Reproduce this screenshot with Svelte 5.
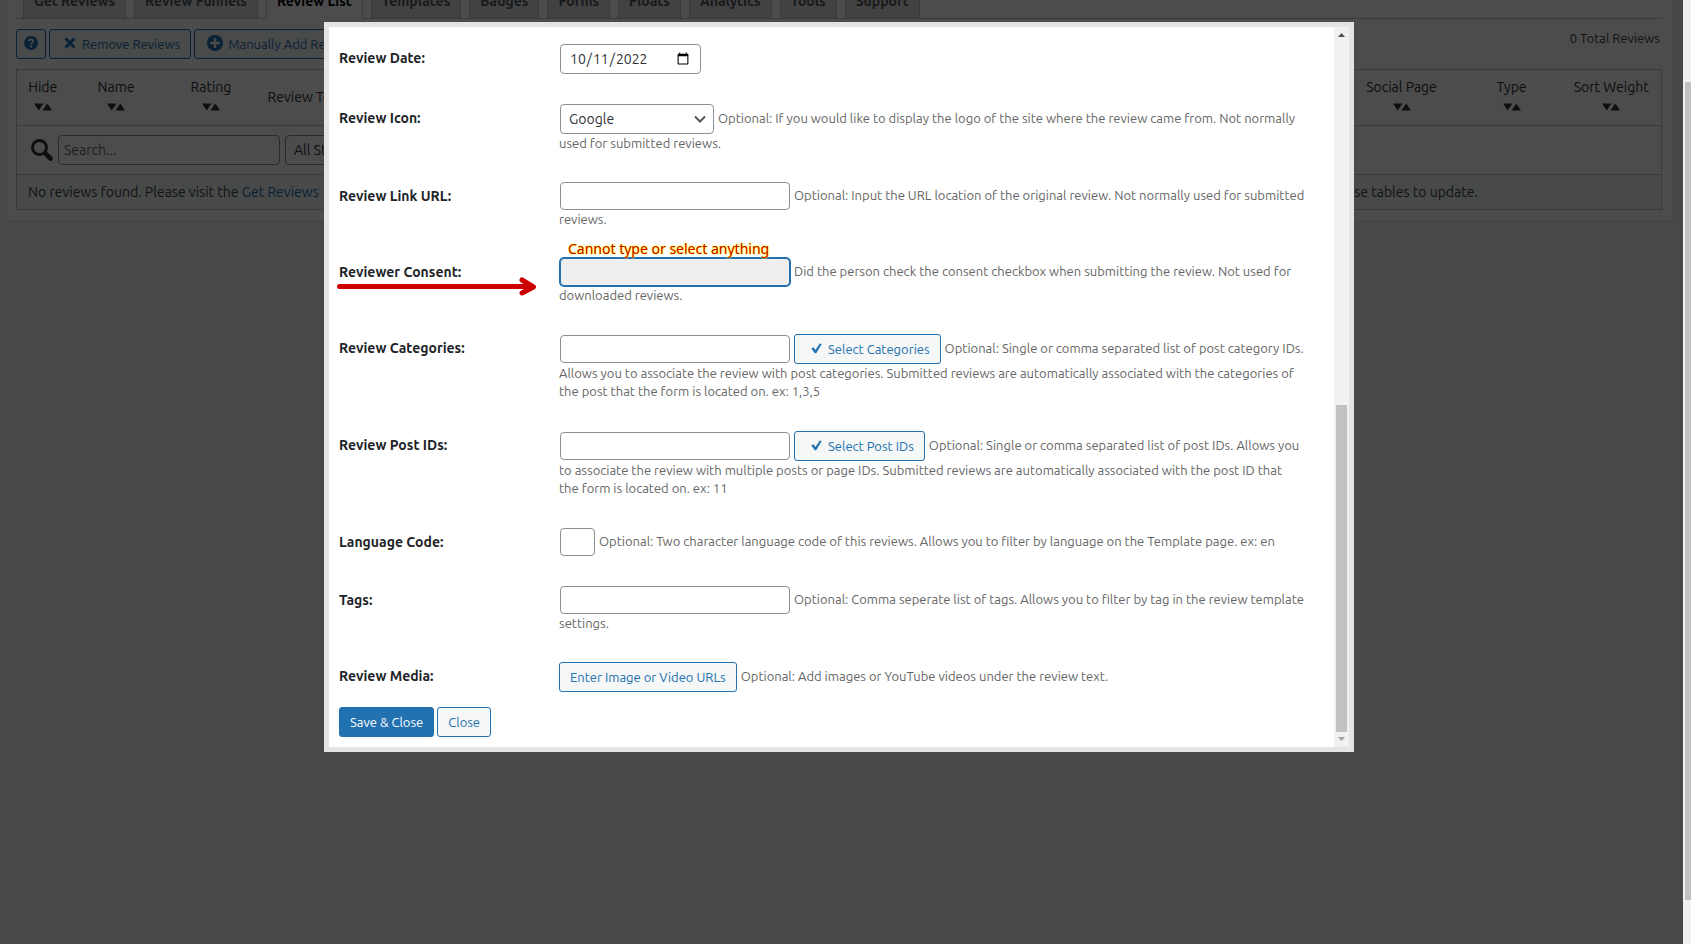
<script lang="ts">
	const tabs = [
		'Get Reviews',
		'Review Funnels',
		'Review List',
		'Templates',
		'Badges',
		'Forms',
		'Floats',
		'Analytics',
		'Tools',
		'Support'
	];
	const activeTab = 'Review List';

	let review = $state({
		date: '2022-10-11',
		icon: 'Google',
		link: '',
		consent: '',
		categories: '',
		posts: '',
		language: '',
		tags: ''
	});
</script>

{#snippet sortable(title: string)}
	<th>
		{title}
		<svg class="sort" width="18" height="8" viewBox="0 0 18 8" aria-hidden="true">
			<path d="M0 0.5H9.5L4.7 7.5ZM8.5 7.5L13.3 0.5L18 7.5Z" />
		</svg>
	</th>
{/snippet}

{#snippet more(lines: string[])}
	{#each lines as line}
		<p class="hint">{line}</p>
	{/each}
{/snippet}

{#snippet check()}
	<svg class="check" width="11" height="11" viewBox="0 0 11 11" aria-hidden="true">
		<path d="M0.3 5.6L2.6 4.3L4.4 7L8.8 0.4L10.7 1L5.2 10.2H3.8Z" />
	</svg>
{/snippet}

<div class="screen">
	<main class="page">
		<section class="panel">
			<nav class="tabs">
				{#each tabs as tab}
					<a href="#{tab}" class="tab" class:active={tab === activeTab}>{tab}</a>
				{/each}
			</nav>

			<div class="toolbar">
				<button class="btn help" aria-label="Help">
					<svg width="14" height="14" viewBox="0 0 14 14" aria-hidden="true">
						<circle cx="7" cy="7" r="7" fill="currentColor" />
						<path d="M4.9 5.3C4.9 2.6 9.2 2.7 9.2 5.1C9.2 6.7 7.1 6.6 7.1 8.3" fill="none" stroke="#f6f7f7" stroke-width="1.8" />
						<rect x="6.1" y="9.4" width="2" height="2" fill="#f6f7f7" />
					</svg>
				</button>
				<button class="btn remove">
					<svg width="12" height="12" viewBox="0 0 12 12" aria-hidden="true">
						<path d="M1.5 1.5L10.5 10.5M10.5 1.5L1.5 10.5" stroke="currentColor" stroke-width="3" />
					</svg>
					Remove Reviews
				</button>
				<button class="btn add">
					<svg width="16" height="16" viewBox="0 0 16 16" aria-hidden="true">
						<circle cx="8" cy="8" r="8" fill="currentColor" />
						<path d="M8 3V13M3 8H13" stroke="#f6f7f7" stroke-width="2.6" />
					</svg>
					Manually Add Review
				</button>
				<span class="total">0 Total Reviews</span>
			</div>

			<table class="reviews">
				<colgroup>
					<col class="c-hide" />
					<col class="c-name" />
					<col class="c-name" />
					<col />
					<col class="c-social" />
					<col class="c-type" />
					<col class="c-type" />
				</colgroup>
				<thead>
					<tr>
						{@render sortable('Hide')}
						{@render sortable('Name')}
						{@render sortable('Rating')}
						<th class="text">Review Text</th>
						{@render sortable('Social Page')}
						{@render sortable('Type')}
						{@render sortable('Sort Weight')}
					</tr>
				</thead>
				<tbody>
					<tr>
						<td colspan="7">
							<div class="filters">
								<svg width="22" height="22" viewBox="0 0 22 22" aria-hidden="true">
									<circle cx="8.5" cy="8.5" r="7" fill="none" stroke="currentColor" stroke-width="3" />
									<path d="M14 14L19.5 19.5" stroke="currentColor" stroke-width="4.6" stroke-linecap="round" />
								</svg>
								<input class="search" type="text" placeholder="Search..." aria-label="Search" />
								<select class="stars" aria-label="Stars">
									<option>All Stars</option>
								</select>
							</div>
						</td>
					</tr>
					<tr class="empty">
						<td colspan="7">
							<div class="notice">
								<span>No reviews found. Please visit the <a href="#get">Get Reviews</a></span>
								<span class="notice-end">these tables to update.</span>
							</div>
						</td>
					</tr>
				</tbody>
			</table>
		</section>
	</main>

	<div class="page-scroll"><div class="thumb"></div></div>

	<div class="overlay">
		<div class="dialog" role="dialog" aria-label="Edit review">
			<form class="form">
				<div class="row">
					<label for="date">Review Date:</label>
					<div class="line">
						<input id="date" class="date" type="date" bind:value={review.date} />
					</div>
				</div>

				<div class="row">
					<label for="icon">Review Icon:</label>
					<div>
						<div class="line">
							<select id="icon" class="icon" bind:value={review.icon}>
								<option>Google</option>
							</select>
							<span class="hint">Optional: If you would like to display the logo of the site where the review came from. Not normally</span>
						</div>
						{@render more(['used for submitted reviews.'])}
					</div>
				</div>

				<div class="row">
					<label for="link">Review Link URL:</label>
					<div>
						<div class="line">
							<input id="link" type="text" bind:value={review.link} />
							<span class="hint">Optional: Input the URL location of the original review. Not normally used for submitted</span>
						</div>
						{@render more(['reviews.'])}
					</div>
				</div>

				<div class="row">
					<label for="consent">Reviewer Consent:</label>
					<svg class="arrow" width="200" height="20" viewBox="0 0 200 20" aria-hidden="true">
						<path d="M2.5 9.5H195M185 3L196.5 10L185 16" />
					</svg>
					<div class="consent">
						<span class="callout">Cannot type or select anything</span>
						<div class="line">
							<input id="consent" type="text" readonly bind:value={review.consent} />
							<span class="hint">Did the person check the consent checkbox when submitting the review. Not used for</span>
						</div>
						{@render more(['downloaded reviews.'])}
					</div>
				</div>

				<div class="row long">
					<label for="categories">Review Categories:</label>
					<div>
						<div class="line">
							<input id="categories" type="text" bind:value={review.categories} />
							<button type="button" class="btn pick">{@render check()}Select Categories</button>
							<span class="hint">Optional: Single or comma separated list of post category IDs.</span>
						</div>
						{@render more([
							'Allows you to associate the review with post categories. Submitted reviews are automatically associated with the categories of',
							'the post that the form is located on. ex: 1,3,5'
						])}
					</div>
				</div>

				<div class="row long">
					<label for="posts">Review Post IDs:</label>
					<div>
						<div class="line">
							<input id="posts" type="text" bind:value={review.posts} />
							<button type="button" class="btn pick">{@render check()}Select Post IDs</button>
							<span class="hint">Optional: Single or comma separated list of post IDs. Allows you</span>
						</div>
						{@render more([
							'to associate the review with multiple posts or page IDs. Submitted reviews are automatically associated with the post ID that',
							'the form is located on. ex: 11'
						])}
					</div>
				</div>

				<div class="row">
					<label for="language">Language Code:</label>
					<div class="line">
						<input id="language" class="code" type="text" maxlength="2" bind:value={review.language} />
						<span class="hint">Optional: Two character language code of this reviews. Allows you to filter by language on the Template page. ex: en</span>
					</div>
				</div>

				<div class="row">
					<label for="tags">Tags:</label>
					<div>
						<div class="line">
							<input id="tags" type="text" bind:value={review.tags} />
							<span class="hint">Optional: Comma seperate list of tags. Allows you to filter by tag in the review template</span>
						</div>
						{@render more(['settings.'])}
					</div>
				</div>

				<div class="row">
					<label for="media">Review Media:</label>
					<div class="line">
						<button type="button" id="media" class="btn">Enter Image or Video URLs</button>
						<span class="hint">Optional: Add images or YouTube videos under the review text.</span>
					</div>
				</div>

				<div class="actions">
					<button type="button" class="btn primary">Save &amp; Close</button>
					<button type="button" class="btn">Close</button>
				</div>
			</form>

			<div class="dialog-scroll">
				<svg width="7" height="4" viewBox="0 0 7 4" aria-hidden="true"><path d="M0 4L3.5 0L7 4Z" fill="#505050" /></svg>
				<div class="thumb"></div>
				<svg width="7" height="4" viewBox="0 0 7 4" aria-hidden="true"><path d="M0 0L3.5 4L7 0Z" fill="#a3a3a3" /></svg>
			</div>
		</div>
	</div>
</div>

<style>
	:global(body) {
		background: #f0f0f1;
	}

	.screen {
		position: relative;
		display: flex;
		height: 100vh;
		overflow: hidden;
		font: 13px/18px Ubuntu, 'Noto Sans', sans-serif;
		color: #3c434a;
	}

	.screen * {
		box-sizing: border-box;
	}

	.page {
		flex: 1;
		min-width: 0;
		padding: 0 10px 0 6px;
	}

	/* scrolled down, so the tops of the tabs are out of view */
	.panel {
		margin-top: -18px;
		padding: 2px 10px 10px 9px;
		background: #fff;
		border: 1px solid #e5e5e5;
		border-top: none;
	}

	.tabs {
		display: flex;
		gap: 8px;
		padding-left: 7px;
		border-bottom: 1px solid #c3c4c7;
	}

	.tab {
		height: 34px;
		padding: 4px 10px;
		border: 1px solid #c3c4c7;
		border-bottom: none;
		background: #dcdcde;
		color: #50575e;
		font-size: 14px;
		font-weight: 700;
		line-height: 24px;
		text-decoration: none;
		white-space: nowrap;
	}

	.tab.active {
		margin-bottom: -1px;
		height: 35px;
		background: #fff;
		color: #000;
	}

	.toolbar {
		display: flex;
		gap: 3px;
		margin: 10px 0;
	}

	.btn {
		display: inline-flex;
		align-items: center;
		height: 30px;
		padding: 0 10px;
		border: 1px solid #2271b1;
		border-radius: 3px;
		background: #f6f7f7;
		color: #2271b1;
		font: inherit;
		white-space: nowrap;
	}

	.btn svg {
		margin-bottom: 2px;
	}

	.btn.help {
		padding: 0 7px;
	}

	.btn.remove {
		gap: 6px;
		padding-left: 14px;
	}

	.btn.add {
		gap: 5px;
		padding-left: 12px;
	}

	.total {
		margin-left: auto;
		padding-right: 2px;
	}

	.reviews {
		width: 100%;
		border: 1px solid #c3c4c7;
		border-collapse: collapse;
		table-layout: fixed;
		font-size: 14px;
	}

	.c-hide {
		width: 52px;
	}

	.c-name {
		width: 95px;
	}

	.c-social {
		width: 120px;
	}

	.c-type {
		width: 100px;
	}

	th {
		height: 56px;
		padding: 0 0 6px;
		color: #2c3338;
		font-weight: 400;
		white-space: nowrap;
	}

	th.text {
		padding: 0 0 2px 9px;
		text-align: left;
	}

	.sort {
		display: block;
		margin: 7px auto 0;
		fill: #2c3338;
	}

	td {
		padding: 0;
		border-top: 1px solid #c3c4c7;
	}

	.filters {
		display: flex;
		align-items: center;
		gap: 5px;
		height: 48px;
		padding-left: 14px;
		color: #2c3338;
	}

	.empty td {
		background: #f0f6f3;
	}

	.notice {
		display: flex;
		justify-content: space-between;
		height: 34px;
		padding-left: 11px;
		line-height: 34px;
	}

	.notice a {
		color: #2271b1;
		text-decoration: none;
	}

	.notice-end {
		width: 328px;
	}

	input,
	select {
		flex: none;
		width: 230px;
		height: 28px;
		padding: 0 8px;
		border: 1px solid #8c8f94;
		border-radius: 4px;
		background-color: #fff;
		color: #2c3338;
		font: 14px/28px Ubuntu, 'Noto Sans', sans-serif;
	}

	select {
		height: 30px;
		appearance: none;
		background: #fff
			url("data:image/svg+xml,%3Csvg xmlns='http://www.w3.org/2000/svg' width='12' height='8'%3E%3Cpath d='M1 1.5l5 5 5-5' fill='none' stroke='%23555' stroke-width='2'/%3E%3C/svg%3E")
			no-repeat right 7px center;
	}

	.search {
		width: 222px;
		height: 30px;
		padding: 0 5px;
	}

	.search::placeholder {
		color: #646970;
	}

	.stars {
		width: 110px;
	}

	.page-scroll {
		width: 8px;
		padding: 82px 0 44px 2px;
		background: #f1f1f1;
	}

	.thumb {
		height: 100%;
		background: #c1c1c1;
	}

	.overlay {
		position: absolute;
		inset: 0 8px 0 0;
		padding: 22px 5px 0 0;
		background: rgba(0, 0, 0, 0.7);
	}

	.dialog {
		display: flex;
		max-width: 1030px;
		margin: 0 auto;
		border: 5px solid #e4e4e4;
		background: #fff;
	}

	.form {
		flex: 1;
		min-width: 0;
		padding: 2px 0 10px 10px;
	}

	.row {
		position: relative;
		display: grid;
		grid-template-columns: 220px 1fr;
		padding: 15px 0;
	}

	.row.long {
		padding-bottom: 16px;
	}

	label {
		padding-top: 5px;
		color: #1d2327;
		font-size: 14px;
		font-weight: 700;
	}

	.line {
		display: flex;
		align-items: center;
		gap: 4px;
	}

	.line input,
	.line select {
		margin-left: 1px;
	}

	.hint {
		margin: 0;
		color: #666;
		white-space: nowrap;
	}

	.line .hint {
		padding-bottom: 2px;
	}

	.line .date {
		width: 141px;
		height: 30px;
	}

	.line .icon {
		width: 154px;
	}

	.line .code {
		width: 35px;
	}

	#consent {
		border-color: #2271b1;
		background: #efefef;
		box-shadow: 0 0 0 1px #2271b1;
	}

	.consent {
		position: relative;
	}

	.callout {
		position: absolute;
		left: 9px;
		top: -18px;
		color: #c00;
		font: 14px/18px 'Noto Sans', sans-serif;
		text-shadow: 0 0 1px #ff0, 0 0 1px #ff0, 0 0 2px #ff6;
		white-space: nowrap;
	}

	.arrow {
		position: absolute;
		left: -2px;
		top: 34px;
		fill: none;
		stroke: #c00;
		stroke-width: 5;
		stroke-linecap: round;
		stroke-linejoin: round;
	}

	.pick {
		padding-left: 16px;
	}

	.check {
		margin-right: 6px;
		fill: currentColor;
	}

	.actions {
		display: flex;
		gap: 3px;
	}

	.btn.primary {
		background: #2271b1;
		color: #fff;
	}

	.dialog-scroll {
		display: flex;
		flex-direction: column;
		align-items: center;
		width: 15px;
		padding: 6px 2px;
		background: #f1f1f1;
	}

	.dialog-scroll .thumb {
		width: 11px;
		height: 327px;
		margin: auto 0 5px;
	}
</style>
